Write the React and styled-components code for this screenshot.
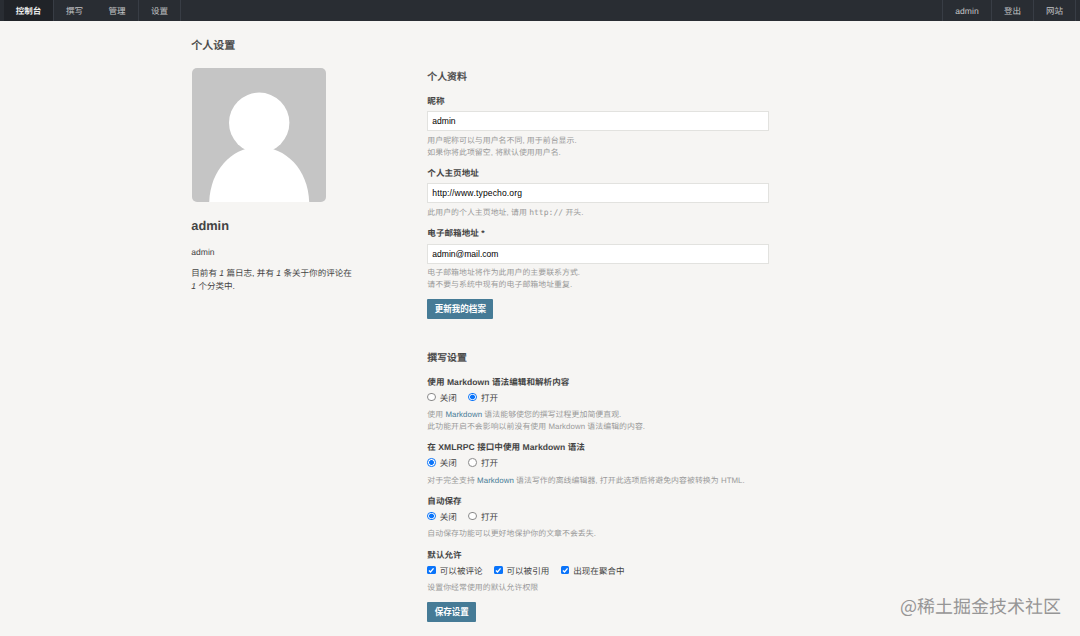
import React from 'react';
import styled, { createGlobalStyle, css } from 'styled-components';

const GlobalStyle = createGlobalStyle`
  * { box-sizing: border-box; }
  body {
    margin: 0;
    background: #f6f5f3;
    color: #444;
    font-family: "Liberation Sans", "Noto Sans CJK SC", sans-serif;
    font-size: 8.55px;
    line-height: 12px;
    text-rendering: geometricPrecision;
    font-kerning: none;
  }
  h2, h3, p { margin: 0; }
`;

const Page = styled.div`
  position: relative;
  width: 1080px;
  height: 636px;
  overflow: hidden;
`;

const TopBar = styled.header`
  display: flex;
  justify-content: space-between;
  height: 21px;
  padding: 0 4px;
  background: #292d33;
`;

const Nav = styled.nav`
  display: flex;
  height: 21px;
`;

const NavItem = styled.a`
  display: flex;
  align-items: center;
  justify-content: center;
  width: ${(p) => p.$width}px;
  color: ${(p) => (p.$active ? '#eee' : '#c2c3c5')};
  font-weight: ${(p) => (p.$active ? 700 : 400)};
  background: ${(p) => (p.$active ? '#202328' : 'transparent')};
  border-${(p) => (p.$side === 'left' ? 'left' : 'right')}: 1px solid ${(p) => (p.$plain ? 'transparent' : '#383d45')};
  ${(p) => p.$last && css`border-right: 1px solid #383d45;`}
`;

const Container = styled.main`
  width: 698px;
  padding: 18px 0 0;
  margin-left: 191.3px;
`;

const Title = styled.h2`
  font-size: 11px;
  line-height: 14px;
  font-weight: 500;
  -webkit-text-stroke: 0.2px #444;
`;

const Columns = styled.div`
  display: flex;
  align-items: flex-start;
`;

const Profile = styled.aside`
  width: 236px;
  padding-top: 14.7px;
`;

const Avatar = styled.svg`
  display: block;
  width: 134.5px;
  height: 134.5px;
  margin-left: 0.3px;
  border-radius: 5px;
`;

const ProfileName = styled.h2`
  margin-top: 14.8px;
  font-size: 12.8px;
  line-height: 17px;
`;

const ProfileText = styled.p`
  margin-top: ${(p) => p.$top}px;
  width: 166px;
  line-height: 13px;
`;

const Settings = styled.section`
  width: 341.7px;
  padding-top: 18.2px;
`;

const Heading = styled.h3`
  margin: ${(p) => p.$top || 0}px 0 9.8px;
  font-size: 9.9px;
  line-height: 14px;
  font-weight: 500;
  -webkit-text-stroke: 0.2px #444;
`;

const FieldBox = styled.div`
  margin-bottom: ${(p) => p.$bottom ?? 8.5}px;
`;

const Label = styled.div`
  font-weight: 700;
  letter-spacing: 0.05px;
`;

const TextInput = styled.input`
  display: block;
  width: 100%;
  height: 20px;
  margin-top: 4.4px;
  padding: 0 4px;
  border: 1px solid #e2e2df;
  border-radius: 0;
  outline: none;
  background: #fff;
  color: #000;
  font: inherit;
  font-kerning: none;
  letter-spacing: ${(p) => p.$tracking || 0}px;
`;

const Description = styled.p`
  margin-top: ${(p) => p.$top || 3.5}px;
  color: #999;
  font-size: 7.88px;
  line-height: 11.8px;
  letter-spacing: 0.05px;
  white-space: nowrap;
`;

const Code = styled.code`
  font-family: "DejaVu Sans Mono", monospace;
  font-size: 8px;
  line-height: 1;
`;

const Link = styled.a`
  color: #467b96;
`;

const Options = styled.div`
  display: flex;
  gap: 11.5px;
  margin-top: 4px;
  height: 13px;
`;

const Option = styled.label`
  display: flex;
  align-items: flex-start;
  gap: 4px;
  line-height: 13px;
`;

const Radio = styled.input`
  appearance: none;
  width: 8.5px;
  height: 8.5px;
  margin: 1px 0 0;
  border: 1px solid #8a8a8a;
  border-radius: 50%;
  background: #fff;
  &:checked {
    border-color: #0a74fa;
    background: radial-gradient(circle, #0a74fa 0 2.1px, #fff 2.7px);
  }
`;

const CheckInput = styled.input`
  appearance: none;
  display: block;
  width: 8.5px;
  height: 8.5px;
  margin: 0;
  border-radius: 1.5px;
  background: #fff;
  box-shadow: inset 0 0 0 1px #8a8a8a;
  &:checked {
    background: #0a74fa;
    box-shadow: none;
  }
`;

const CheckFrame = styled.span`
  display: grid;
  margin-top: 1px;
  > * { grid-area: 1 / 1; }
`;

const CheckMark = styled.svg`
  width: 8.5px;
  height: 8.5px;
  pointer-events: none;
`;

const Button = styled.button`
  display: block;
  width: ${(p) => p.$width}px;
  height: 20px;
  padding: 0;
  border: 0;
  border-radius: 1px;
  background: #467b96;
  color: #fff;
  font: inherit;
  font-weight: 700;
`;

const Watermark = styled.div`
  position: absolute;
  left: 900px;
  top: 593px;
  font-family: "Noto Sans CJK SC", sans-serif;
  font-size: 18px;
  line-height: 26px;
  font-weight: 400;
  color: #969696;
  white-space: nowrap;
`;

function Field({ label, value, children, bottom, tracking }) {
  return (
    <FieldBox $bottom={bottom}>
      <Label>{label}</Label>
      <TextInput type="text" defaultValue={value} $tracking={tracking} />
      <Description>{children}</Description>
    </FieldBox>
  );
}

function RadioField({ label, name, on, children }) {
  return (
    <FieldBox $bottom={8.7}>
      <Label>{label}</Label>
      <Options>
        <Option><Radio type="radio" name={name} defaultChecked={!on} />关闭</Option>
        <Option><Radio type="radio" name={name} defaultChecked={on} />打开</Option>
      </Options>
      <Description $top={4.3}>{children}</Description>
    </FieldBox>
  );
}

function Check({ children }) {
  return (
    <Option>
      <CheckFrame>
        <CheckInput type="checkbox" defaultChecked />
        <CheckMark viewBox="0 0 13 13">
          <path d="M3 6.8 L5.4 9.2 L10 3.6" fill="none" stroke="#fff" strokeWidth="2" />
        </CheckMark>
      </CheckFrame>
      {children}
    </Option>
  );
}

export default function App() {
  return (
    <Page>
      <GlobalStyle />
      <TopBar>
        <Nav>
          <NavItem $width={50} $active>控制台</NavItem>
          <NavItem $width={42} $plain>撰写</NavItem>
          <NavItem $width={43}>管理</NavItem>
          <NavItem $width={42}>设置</NavItem>
        </Nav>
        <Nav>
          <NavItem $width={49} $side="left">admin</NavItem>
          <NavItem $width={42} $side="left">登出</NavItem>
          <NavItem $width={43} $side="left" $last>网站</NavItem>
        </Nav>
      </TopBar>
      <Container>
        <Title>个人设置</Title>
        <Columns>
          <Profile>
            <Avatar viewBox="0 0 134.5 134.5">
              <rect width="134.5" height="134.5" fill="#c5c5c5" />
              <circle cx="67.2" cy="54.8" r="30.2" fill="#fff" />
              <path d="M17.2 134.5 C18.2 101 41 79 67.2 79 C93.5 79 116.2 101 117.2 134.5 Z" fill="#fff" />
            </Avatar>
            <ProfileName>admin</ProfileName>
            <ProfileText $top={12}>admin</ProfileText>
            <ProfileText $top={8}>
              目前有 <em>1</em> 篇日志, 并有 <em>1</em> 条关于你的评论在 <em>1</em> 个分类中.
            </ProfileText>
          </Profile>
          <Settings>
            <Heading>个人资料</Heading>
            <Field label="昵称" value="admin">
              用户昵称可以与用户名不同, 用于前台显示.<br />
              如果你将此项留空, 将默认使用用户名.
            </Field>
            <Field label="个人主页地址" value="http://www.typecho.org" tracking={0.13}>
              此用户的个人主页地址, 请用 <Code>http://</Code> 开头.
            </Field>
            <Field label="电子邮箱地址 *" value="admin@mail.com" bottom={8.2}>
              电子邮箱地址将作为此用户的主要联系方式.<br />
              请不要与系统中现有的电子邮箱地址重复.
            </Field>
            <Button $width={66}>更新我的档案</Button>

            <Heading $top={33}>撰写设置</Heading>
            <RadioField label="使用 Markdown 语法编辑和解析内容" name="markdown" on>
              使用 <Link>Markdown</Link> 语法能够使您的撰写过程更加简便直观.<br />
              此功能开启不会影响以前没有使用 Markdown 语法编辑的内容.
            </RadioField>
            <RadioField label="在 XMLRPC 接口中使用 Markdown 语法" name="xmlrpc" on={false}>
              对于完全支持 <Link>Markdown</Link> 语法写作的离线编辑器, 打开此选项后将避免内容被转换为 HTML.
            </RadioField>
            <RadioField label="自动保存" name="autosave" on={false}>
              自动保存功能可以更好地保护你的文章不会丢失.
            </RadioField>
            <FieldBox $bottom={8}>
              <Label>默认允许</Label>
              <Options>
                <Check>可以被评论</Check>
                <Check>可以被引用</Check>
                <Check>出现在聚合中</Check>
              </Options>
              <Description $top={4.6}>设置你经常使用的默认允许权限</Description>
            </FieldBox>
            <Button $width={49}>保存设置</Button>
          </Settings>
        </Columns>
      </Container>
      <Watermark>@稀土掘金技术社区</Watermark>
    </Page>
  );
}
